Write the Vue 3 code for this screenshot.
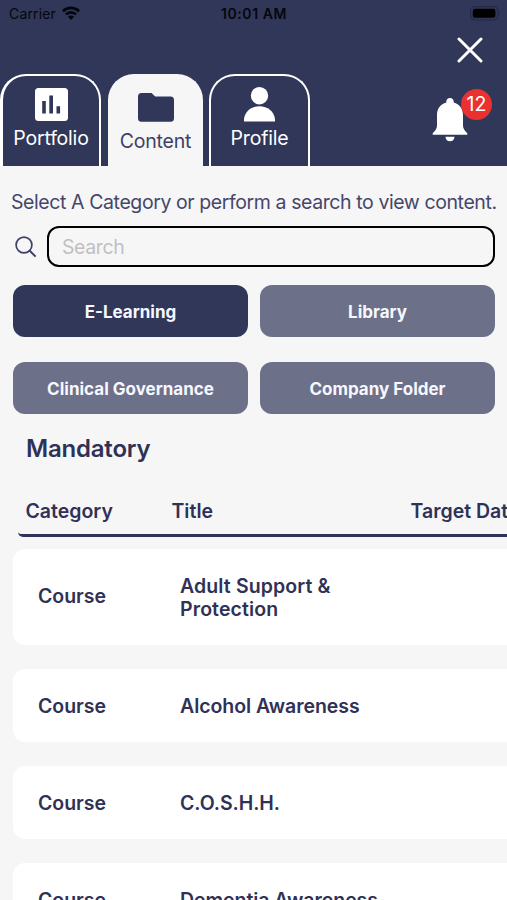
<script setup>
const tabs = [
  { label: 'Portfolio', icon: 'chart' },
  { label: 'Content', icon: 'folder', active: true },
  { label: 'Profile', icon: 'person' },
]
const categories = [
  { label: 'E-Learning', active: true },
  { label: 'Library' },
  { label: 'Clinical Governance' },
  { label: 'Company Folder' },
]
const courses = [
  { category: 'Course', title: 'Adult Support & Protection', tall: true },
  { category: 'Course', title: 'Alcohol Awareness' },
  { category: 'Course', title: 'C.O.S.H.H.' },
  { category: 'Course', title: 'Dementia Awareness' },
]
</script>

<template>
  <div class="screen">
    <header class="header">
      <div class="status">
        <div class="carrier">
          <span>Carrier</span>
          <svg class="wifi" viewBox="0 0 18 14" width="18" height="14">
            <g fill="none" stroke="#05060c" stroke-width="2.7">
              <path d="M0.9 5.2a11.5 11.5 0 0 1 16.2 0" />
              <path d="M3.9 8.4a7.2 7.2 0 0 1 10.2 0" />
            </g>
            <path d="M9 14L5.9 10.8a4.4 4.4 0 0 1 6.2 0z" fill="#05060c" />
          </svg>
        </div>
        <span class="time">10:01 AM</span>
        <svg class="battery" viewBox="0 0 31 15" width="31" height="15">
          <rect x="0.6" y="0.6" width="27.4" height="13.4" rx="4.4" fill="#303759" stroke="#252946" stroke-width="1.2" />
          <rect x="2.8" y="2.8" width="22.6" height="9" rx="2.2" fill="#000" />
          <path d="M29.3 5.3q1.6 2 0 4z" fill="#252946" />
        </svg>
      </div>
      <div class="close-row">
        <svg viewBox="0 0 26 26" width="26" height="26">
          <path d="M2 2L24 24M24 2L2 24" stroke="#fff" stroke-width="3" stroke-linecap="round" />
        </svg>
      </div>
      <div class="nav">
        <nav class="tabs">
          <div v-for="tab in tabs" :key="tab.label" class="tab" :class="{ active: tab.active }">
            <svg v-if="tab.icon === 'chart'" viewBox="0 0 33 33" width="33" height="33">
              <rect width="33" height="33" rx="3.5" fill="#fff" />
              <path d="M7.2 13h3.600v12.400H7.200zM14.300 7.500h3.700v17.900h-3.700zM21.500 18.200h3.600v7.200h-3.600z" fill="#303759" />
            </svg>
            <svg v-else-if="tab.icon === 'folder'" viewBox="0 0 36 29" width="36" height="29">
              <path d="M3.500 0H13.500L17.200 3.400H32.500Q36 3.400 36 6.900V25.200Q36 28.700 32.500 28.700H3.500Q0 28.700 0 25.200V3.500Q0 0 3.500 0Z" fill="#303759" />
            </svg>
            <svg v-else viewBox="0 0 31 35" width="31" height="35">
              <circle cx="15.500" cy="8.700" r="8.700" fill="#fff" />
              <path d="M0 34.600V32C1 24.300 7.500 19.200 15.500 19.200S30 24.300 31 32V34.600Z" fill="#fff" />
            </svg>
            <span>{{ tab.label }}</span>
          </div>
        </nav>
        <div class="bell">
          <svg viewBox="0 0 36 44" width="36" height="44">
            <path d="M18 0C20.200 0 21.700 1.600 21.700 3.500V4.500C27.500 6 31 10.500 31 17V27.500C31 30.500 32.500 32.500 35.300 35.200V36.800H0.700V35.200C3.500 32.500 5 30.500 5 27.500V17C5 10.500 8.500 6 14.300 4.500V3.500C14.300 1.600 15.800 0 18 0Z" fill="#fff" />
            <path d="M13.500 38.800H22.500C22.300 41.800 20.500 43.300 18 43.300S13.700 41.800 13.500 38.800Z" fill="#fff" />
          </svg>
          <span class="badge">12</span>
        </div>
      </div>
    </header>

    <p class="intro">Select A Category or perform a search to view content.</p>
    <div class="search">
      <svg viewBox="0 0 22 22" width="22" height="22">
        <g fill="none" stroke="#3c4165" stroke-width="1.700">
          <circle cx="9" cy="9" r="7.900" />
          <path d="M14.500 14.500L20.600 20.600" stroke-width="2" />
        </g>
      </svg>
      <input class="field" type="text" placeholder="Search" />
    </div>

    <div class="categories">
      <button v-for="c in categories" :key="c.label" class="category" :class="{ active: c.active }">{{ c.label }}</button>
    </div>

    <h2 class="heading">Mandatory</h2>
    <div class="columns">
      <span>Category</span><span>Title</span><span class="date">Target Date</span>
    </div>
    <div class="rows">
      <div v-for="c in courses" :key="c.title" class="row" :class="{ tall: c.tall }">
        <span class="kind">{{ c.category }}</span>
        <span class="title">{{ c.title }}</span>
      </div>
    </div>
  </div>
</template>

<style>
body {
  margin: 0;
  overflow: hidden;
}
</style>

<style scoped>
.screen {
  width: 507px;
  height: 900px;
  overflow: hidden;
  background: #f6f6f7;
  color: #303156;
  font-family: Inter, "Liberation Sans", sans-serif;
  box-sizing: border-box;
}
.screen * {
  box-sizing: border-box;
}
svg {
  display: block;
  flex: none;
}
.header {
  height: 166px;
  background: #303759;
}
.status {
  height: 28px;
  display: grid;
  grid-template-columns: 1fr auto 1fr;
  align-items: center;
  padding: 0 6px 0 9px;
  color: #05060c;
  font-size: 14px;
}
.carrier {
  display: flex;
  align-items: center;
  gap: 6px;
  letter-spacing: 0.15px;
}
.carrier span,
.time {
  margin-top: -2px;
}
.wifi {
  margin-top: -3px;
}
.time {
  margin-right: 2px;
  font-weight: 600;
  letter-spacing: 0.55px;
}
.battery {
  justify-self: end;
  margin-top: -2px;
}
.close-row {
  height: 46px;
  display: flex;
  justify-content: flex-end;
  padding: 9px 24px 0 0;
}
.nav {
  height: 92px;
  display: flex;
  justify-content: space-between;
}
.tabs {
  display: flex;
  gap: 6px;
}
.tab {
  width: 101px;
  border: 2.500px solid #fff;
  border-bottom: 0;
  border-radius: 26px 26px 0 0;
  display: flex;
  flex-direction: column;
  align-items: center;
  padding-top: 12px;
  color: #fff;
  font-size: 19.500px;
  line-height: 24px;
  letter-spacing: -0.2px;
}
.tab:first-child {
  width: 101px;
  margin-right: 1px;
  border-left-width: 3px;
}
.tab span {
  margin-top: 5px;
}
.tab:last-child {
  padding-top: 11px;
}
.tab:last-child span {
  margin-top: 4px;
}
.tab.active {
  width: 95px;
  background: #f6f6f7;
  border-color: #f6f6f7;
  color: #3c4165;
  padding-top: 17px;
}
.tab.active span {
  margin-top: 7px;
}
.bell {
  position: relative;
  padding: 24px 39px 0 0;
}
.badge {
  position: absolute;
  top: 15px;
  right: 15px;
  width: 31px;
  height: 31px;
  border-radius: 50%;
  background: #eb3030;
  color: #fff;
  font-size: 19.500px;
  line-height: 31px;
  text-align: center;
}
.intro {
  margin: 24px 0 0 11px;
  height: 24px;
  font-size: 19.500px;
  line-height: 25px;
  letter-spacing: -0.41px;
  color: #45466a;
  white-space: nowrap;
}
.search {
  display: flex;
  align-items: center;
  gap: 10px;
  margin: 12px 12px 0 15px;
}
.field {
  flex: 1;
  min-width: 0;
  height: 41px;
  border: 2.500px solid #000;
  border-radius: 12px;
  background: transparent;
  padding: 0 13px;
  font: 19.500px Inter, "Liberation Sans", sans-serif;
  letter-spacing: -0.4px;
  outline: none;
}
.field::placeholder {
  color: #c0c0c2;
  opacity: 1;
}
.categories {
  display: grid;
  grid-template-columns: 1fr 1fr;
  gap: 25px 12px;
  margin: 18px 12px 0 13px;
}
.category {
  height: 52px;
  border: 0;
  border-radius: 12px;
  padding: 1px 0 0;
  background: #6c7088;
  color: #f6f7ff;
  font: 700 17px Inter, "Liberation Sans", sans-serif;
}
.category.active {
  background: #303759;
}
.heading {
  margin: 19px 0 0 26px;
  font-size: 24px;
  line-height: 32px;
  font-weight: 600;
  letter-spacing: -0.2px;
}
.columns {
  display: grid;
  grid-template-columns: 146px 239px 140px;
  margin: 31px 0 0 18px;
  width: 700px;
  height: 41px;
  padding: 3px 0 0 7.500px;
  border-bottom: 3px solid #303156;
  border-bottom-left-radius: 5px;
  font-size: 19.500px;
  line-height: 24px;
  font-weight: 600;
}
.rows {
  display: flex;
  flex-direction: column;
  gap: 24px;
  padding: 12px 0 0 13px;
}
.row {
  width: 700px;
  height: 73px;
  flex: none;
  display: grid;
  grid-template-columns: 142px 210px;
  align-items: center;
  padding: 2px 0 0 25px;
  border-radius: 12px;
  background: #fff;
  font-size: 19.500px;
  line-height: 23px;
  font-weight: 600;
  letter-spacing: -0.05px;
}
.row.tall {
  height: 96px;
}
.row.tall .kind {
  margin-top: -3px;
}
.row.tall .title {
  letter-spacing: 0.12px;
}
</style>
